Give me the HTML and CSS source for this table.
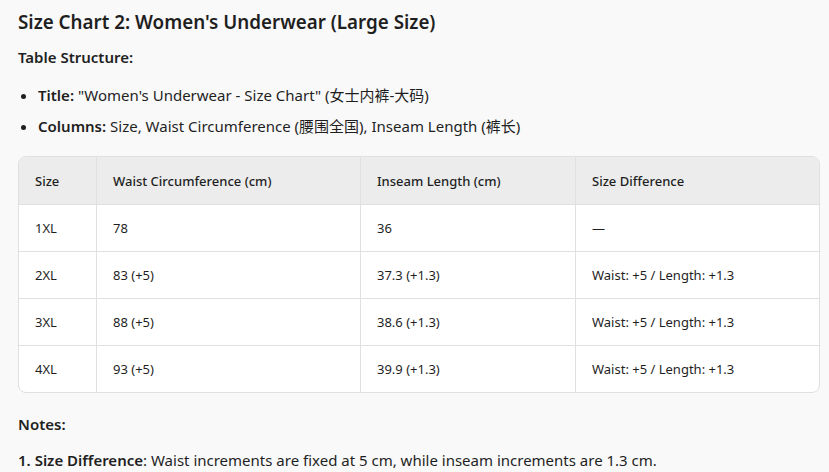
FILE: index.html
```html
<!DOCTYPE html>
<html>
<head>
<meta charset="utf-8">
<link rel="stylesheet" href="styles.css">
</head>
<body>
<div class="page">
  <h2 class="title">Size Chart 2: Women's Underwear (Large Size)</h2>
  <p class="label">Table Structure:</p>
  <ul class="bullets">
    <li><b>Title:</b> "Women's Underwear - Size Chart" (女士内裤-大码)</li>
    <li><b>Columns:</b> Size, Waist Circumference (腰围全国), Inseam Length (裤长)</li>
  </ul>
  <div class="table-wrap">
    <table class="chart">
      <thead>
        <tr><th class="c1">Size</th><th class="c2">Waist Circumference (cm)</th><th class="c3">Inseam Length (cm)</th><th class="c4">Size Difference</th></tr>
      </thead>
      <tbody>
        <tr><td>1XL</td><td>78</td><td>36</td><td>—</td></tr>
        <tr><td>2XL</td><td>83 (+5)</td><td>37.3 (+1.3)</td><td>Waist: +5 / Length: +1.3</td></tr>
        <tr><td>3XL</td><td>88 (+5)</td><td>38.6 (+1.3)</td><td>Waist: +5 / Length: +1.3</td></tr>
        <tr><td>4XL</td><td>93 (+5)</td><td>39.9 (+1.3)</td><td>Waist: +5 / Length: +1.3</td></tr>
      </tbody>
    </table>
  </div>
  <p class="label notes">Notes:</p>
  <ol class="numbered">
    <li><b>Size Difference</b>: Waist increments are fixed at 5 cm, while inseam increments are 1.3 cm.</li>
  </ol>
</div>
</body>
</html>
```
FILE: styles.css
```css
html, body {
  margin: 0;
  padding: 0;
  background: #f9f9f9;
}
body {
  font-family: "Noto Sans", "Noto Sans CJK SC", sans-serif;
  color: #1f1f1f;
  overflow: hidden;
}
.page {
  padding: 9px 10px 0 18px;
}
.title {
  font-size: 18.8px;
  font-weight: 600;
  margin: 0;
  line-height: 26px;
}
.label {
  font-size: 15px;
  font-weight: 600;
  margin: 10px 0 0 0;
  line-height: 24px;
}
.bullets {
  margin: 14px 0 0 0;
  padding-left: 20px;
  font-size: 15px;
  line-height: 24px;
}
.bullets li {
  margin-bottom: 7px;
}
.bullets b { font-weight: 600; }
.table-wrap {
  margin-top: 18px;
  border: 1px solid #e0e0e0;
  border-radius: 8px;
  overflow: hidden;
  width: 800px;
  background: #fff;
}
.chart {
  width: 100%;
  border-collapse: collapse;
  font-size: 13px;
}
.chart th {
  background: #ececec;
  font-weight: 500;
  text-align: left;
  height: 47px;
  padding: 0 16px;
  border-bottom: 1px solid #e0e0e0;
}
.chart td {
  height: 46px;
  padding: 0 16px;
  border-top: 1px solid #e0e0e0;
}
.chart th + th, .chart td + td {
  border-left: 1px solid #e0e0e0;
}
.chart .c1 { width: 45px; }
.chart .c2 { width: 231px; }
.chart .c3 { width: 182px; }
.notes {
  margin-top: 19px;
}
.numbered {
  margin: 12px 0 0 0;
  padding-left: 0;
  list-style: none;
  font-size: 15px;
  line-height: 24px;
}
.numbered li::before {
  content: "1. ";
  font-weight: 600;
}
.numbered b { font-weight: 600; }
```
